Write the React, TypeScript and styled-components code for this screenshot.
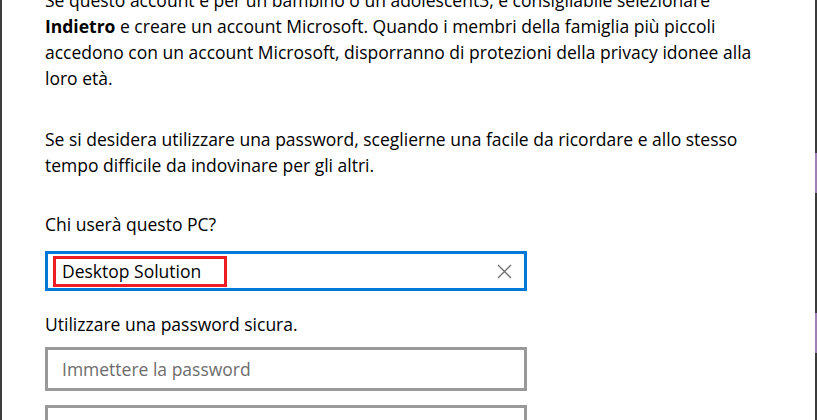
import React from "react";
import styled, { createGlobalStyle } from "styled-components";

const GlobalStyle = createGlobalStyle`
  html, body {
    margin: 0;
    padding: 0;
    background: #ffffff;
  }
  body {
    font-family: "Open Sans", "Noto Sans", "Liberation Sans", sans-serif;
    color: #000000;
  }
`;

const Window = styled.div`
  width: 817px;
  height: 420px;
  overflow: hidden;
  display: flex;
  background: #ffffff;
`;

const LeftEdge = styled.div`
  width: 2px;
  flex-shrink: 0;
  background: #3b3b3b;
`;

const RightEdge = styled.div`
  width: 2px;
  flex-shrink: 0;
  background: linear-gradient(
    to bottom,
    #3b3b3b 0 153px,
    #a27fb3 153px 193px,
    #3b3b3b 193px 313px,
    #a27fb3 313px 353px,
    #3b3b3b 353px
  );
`;

const Content = styled.div`
  flex: 1;
  padding-left: 43px;
  display: flex;
  flex-direction: column;
  margin-top: -13px;
`;

const Paragraph = styled.p<{ $gap?: number }>`
  margin: 0 0 ${(p) => p.$gap ?? 35}px 0;
  font-size: 17.5px;
  line-height: 26px;
  white-space: nowrap;
`;

const Strong = styled.b`
  font-weight: 700;
`;

const Field = styled.div<{ $focused?: boolean; $gap?: number }>`
  position: relative;
  box-sizing: border-box;
  width: 482px;
  height: ${(p) => (p.$focused ? 40 : 44)}px;
  flex-shrink: 0;
  margin-bottom: ${(p) => p.$gap ?? 0}px;
  border: 3px solid ${(p) => (p.$focused ? "#0078d7" : "#999999")};
  background: #ffffff;
  display: flex;
  align-items: center;
  padding: 0 14px 0 14px;
`;

const FieldText = styled.span<{ $placeholder?: boolean }>`
  flex: 1;
  font-size: 17.5px;
  color: ${(p) => (p.$placeholder ? "#6d6d6d" : "#000000")};
  white-space: nowrap;
`;

const ClearButton = styled.span`
  display: flex;
  align-items: center;
  justify-content: center;
  width: 20px;
  height: 20px;
  margin-right: -4px;
`;

const Highlight = styled.span`
  position: absolute;
  left: 5px;
  top: 2px;
  width: 174px;
  height: 31px;
  box-sizing: border-box;
  border: 3px solid #ee1c24;
  pointer-events: none;
`;

const ClearIcon = () => (
  <svg width="15" height="15" viewBox="0 0 15 15">
    <path d="M1 1 L14 14 M14 1 L1 14" stroke="#6f6f6f" strokeWidth="1.3" fill="none" />
  </svg>
);

export default function App() {
  return (
    <>
      <GlobalStyle />
      <Window>
        <LeftEdge />
        <Content>
          <Paragraph>
            Se questo account è per un bambino o un adolescent3, è consigliabile selezionare
            <br />
            <Strong>Indietro</Strong> e creare un account Microsoft. Quando i membri della famiglia più piccoli
            <br />
            accedono con un account Microsoft, disporranno di protezioni della privacy idonee alla
            <br />
            loro età.
          </Paragraph>
          <Paragraph $gap={33}>
            Se si desidera utilizzare una password, sceglierne una facile da ricordare e allo stesso
            <br />
            tempo difficile da indovinare per gli altri.
          </Paragraph>
          <Paragraph $gap={14}>Chi userà questo PC?</Paragraph>
          <Field $focused $gap={20}>
            <FieldText>Desktop Solution</FieldText>
            <ClearButton>
              <ClearIcon />
            </ClearButton>
            <Highlight />
          </Field>
          <Paragraph $gap={10}>Utilizzare una password sicura.</Paragraph>
          <Field $gap={14}>
            <FieldText $placeholder>Immettere la password</FieldText>
          </Field>
          <Field>
            <FieldText $placeholder>Immettere di nuovo la password</FieldText>
          </Field>
        </Content>
        <RightEdge />
      </Window>
    </>
  );
}
